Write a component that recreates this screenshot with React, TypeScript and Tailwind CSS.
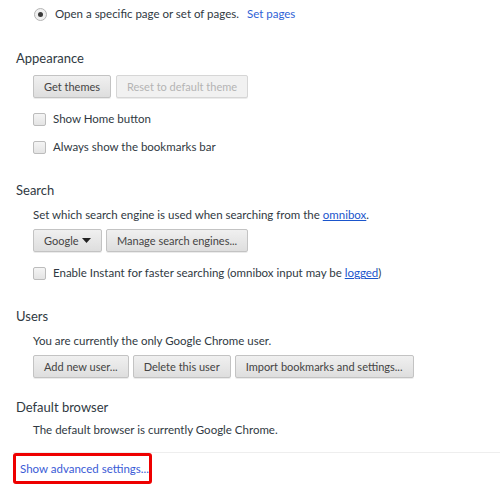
import type { ReactNode } from 'react'

const font = "font-['Lato','Open_Sans',sans-serif]"

function Btn({ children, disabled, className = '' }: { children: ReactNode; disabled?: boolean; className?: string }) {
  return (
    <button
      className={`h-[23px] px-[10px] rounded-[2px] border text-[11px] leading-none whitespace-nowrap shadow-[0_1px_0_rgba(0,0,0,0.08)] ${
        disabled
          ? 'border-[#d6d6d6] bg-[#f1f1f1] text-[#b4b4b4]'
          : 'border-[#c3c3c3] bg-gradient-to-b from-[#f0f0f0] to-[#dedede] text-[#444]'
      } ${className}`}
    >
      {children}
    </button>
  )
}

function Check({ children }: { children: ReactNode }) {
  return (
    <div className="flex items-center h-[20px] pl-[33px] gap-[7px] whitespace-nowrap">
      <span className="w-[13px] h-[13px] rounded-[2px] border border-[#bcbcbc] bg-gradient-to-b from-[#f4f4f4] to-[#e4e4e4]" />
      <span>{children}</span>
    </div>
  )
}

function Heading({ children, className = '' }: { children: ReactNode; className?: string }) {
  return <div className={`h-[20px] leading-[20px] pl-[16px] text-[13px] text-[#303942] ${className}`}>{children}</div>
}

export default function App() {
  return (
    <div className={`w-[500px] h-[500px] bg-white overflow-hidden text-[11.5px] text-[#303942] ${font}`}>
      <div className="h-[28px] flex items-center pl-[34px] gap-[8px]">
        <span className="w-[13px] h-[13px] rounded-full border border-[#b5b5b5] bg-[#f0f0f0] flex items-center justify-center">
          <span className="w-[5px] h-[5px] rounded-full bg-[#3a3a3a]" />
        </span>
        <span>
          Open a specific page or set of pages.<span className="ml-[8px] text-[#2f62d6]">Set pages</span>
        </span>
      </div>

      <Heading className="mt-[20px]">Appearance</Heading>
      <div className="mt-[7px] pl-[33px] flex gap-[5px]">
        <Btn>Get themes</Btn>
        <Btn disabled>Reset to default theme</Btn>
      </div>
      <div className="mt-[11px]">
        <Check>Show Home button</Check>
      </div>
      <div className="mt-[8px]">
        <Check>Always show the bookmarks bar</Check>
      </div>

      <Heading className="mt-[23px]">Search</Heading>
      <div className="mt-[5px] h-[20px] leading-[20px] pl-[33px] whitespace-nowrap">
        Set which search engine is used when searching from the{' '}
        <span className="text-[#1a55cc] underline">omnibox</span>.
      </div>
      <div className="mt-[4px] pl-[33px] flex gap-[4px]">
        <Btn className="w-[69px] flex items-center justify-between">
          <span>Google</span>
          <svg width="9" height="5" viewBox="0 0 9 5">
            <path d="M0 0h9L4.5 5z" fill="#222" />
          </svg>
        </Btn>
        <Btn>Manage search engines...</Btn>
      </div>
      <div className="mt-[11px]">
        <Check>
          Enable Instant for faster searching (omnibox input may be{' '}
          <span className="text-[#1a55cc] underline">logged</span>)
        </Check>
      </div>

      <Heading className="mt-[23px]">Users</Heading>
      <div className="mt-[5px] h-[20px] leading-[20px] pl-[33px]">You are currently the only Google Chrome user.</div>
      <div className="mt-[4px] pl-[33px] flex gap-[4px]">
        <Btn>Add new user...</Btn>
        <Btn>Delete this user</Btn>
        <Btn>Import bookmarks and settings...</Btn>
      </div>

      <Heading className="mt-[19px]">Default browser</Heading>
      <div className="mt-[3px] h-[20px] leading-[20px] pl-[33px]">The default browser is currently Google Chrome.</div>

      <div className="mt-[12px] ml-[13px] border-t border-[#eeeeee]" />
      <div className="ml-[13px] w-[139px] h-[31px] border-[3px] border-[#ee0000] rounded-[3px] flex items-center pl-[4px] whitespace-nowrap">
        <span className="text-[#3a5bd6]">Show advanced settings...</span>
      </div>
    </div>
  )
}
